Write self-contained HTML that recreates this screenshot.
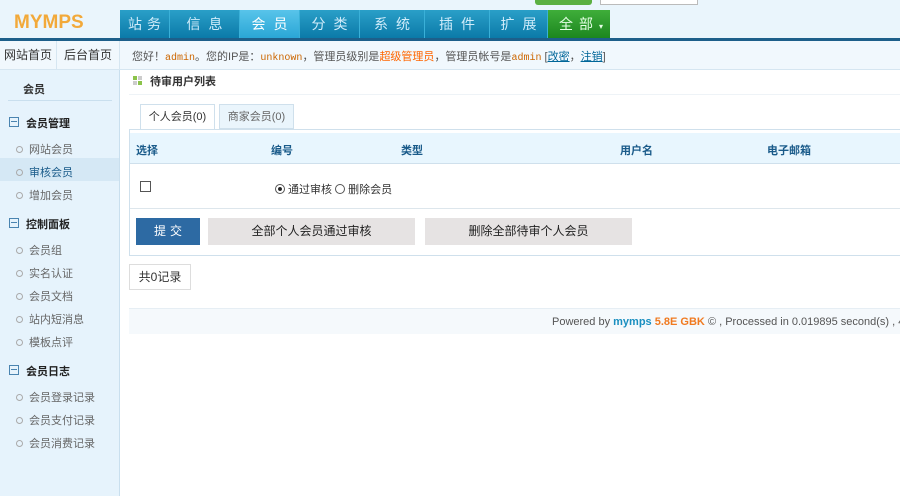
<!DOCTYPE html>
<html><head><meta charset="utf-8"><style>
*{margin:0;padding:0;box-sizing:border-box}
body{width:900px;height:496px;overflow:hidden;background:#fff;font-family:"Liberation Sans","Noto Sans CJK SC",sans-serif;font-size:12px;color:#333;position:relative}
.a{position:absolute}
.top{left:0;top:0;width:900px;height:40px;background:#eaf5fc}
.logo{left:14px;top:12px;font-size:19px;font-weight:bold;color:#f2a93a}
.nav{left:120px;top:10px;height:28px;width:490px;background:linear-gradient(#2a9fc8,#0b7aa8)}
.nav span{position:absolute;top:0;height:28px;line-height:28px;text-align:center;color:#d0ecfa;font-size:14px;letter-spacing:8px;text-indent:8px;border-right:1px solid #3ab0d8;white-space:nowrap;overflow:hidden}
.line{left:0;top:38px;width:900px;height:3px;background:#1d5f8a}
.row2{left:0;top:41px;width:900px;height:29px;background:#f1f8fd;border-bottom:1px solid #d6e6f1}
.side{left:0;top:70px;width:120px;height:426px;background:#e6f3fc;border-right:1px solid #c9dfee}
.si{position:absolute;left:29px;color:#666;font-size:11px}
.si:before{content:"";position:absolute;left:-13px;top:5px;width:5px;height:5px;border:1px solid #aaa;border-radius:50%}
.sh{position:absolute;left:26px;font-weight:bold;color:#222;font-size:11px}
.sh:before{content:"";position:absolute;left:-17px;top:2px;width:10px;height:10px;border:1px solid #4a84b0;box-sizing:border-box}
.sh:after{content:"";position:absolute;left:-15px;top:6px;width:6px;height:1px;background:#4a84b0}
.btn{position:absolute;top:218px;height:27px;line-height:27px;text-align:center;background:#e6e3e3;color:#222;font-size:12px}
</style></head><body>
<div class="a top"></div>
<div class="a" style="left:535px;top:0;width:57px;height:5px;background:#5bb042;border-radius:0 0 3px 3px"></div>
<div class="a" style="left:600px;top:0;width:98px;height:5px;border:1px solid #bbb;border-top:none;background:#fff"></div>
<div class="a logo">MYMPS</div>
<div class="a nav">
<span style="left:0;width:50px;letter-spacing:5px;text-indent:5px">站务</span>
<span style="left:50px;width:70px">信息</span>
<span style="left:120px;width:60px;background:linear-gradient(#58c4ea,#2aa6d6);color:#fff">会员</span>
<span style="left:180px;width:60px">分类</span>
<span style="left:240px;width:65px">系统</span>
<span style="left:305px;width:65px">插件</span>
<span style="left:370px;width:58px">扩展</span>
<span style="left:428px;width:62px;background:linear-gradient(#3fae3a,#1c861f);border:none;color:#e6ffe6;letter-spacing:6px;text-indent:4px">全部<small style="font-size:8px;letter-spacing:0">▾</small></span>
</div>
<div class="a line"></div>
<div class="a row2"></div>
<div class="a" style="left:0;top:41px;width:57px;height:29px;line-height:28px;text-align:center;border-right:1px solid #d6e6f1;font-size:12px">网站首页</div>
<div class="a" style="left:57px;top:41px;width:63px;height:29px;line-height:28px;text-align:center;border-right:1px solid #d6e6f1;font-size:12px">后台首页</div>
<div class="a" style="left:132px;top:48px;font-size:11px;color:#555;white-space:nowrap">您好！<span style="color:#c60;font-family:'Liberation Mono',monospace;font-size:10px">admin</span>。您的IP是：<span style="color:#c60;font-family:'Liberation Mono',monospace;font-size:10px">unknown</span>，管理员级别是<span style="color:#f60">超级管理员</span>，管理员帐号是<span style="color:#c60;font-family:'Liberation Mono',monospace;font-size:10px">admin</span> [<u style="color:#069">改密</u>，<u style="color:#069">注销</u>]</div>
<div class="a side"></div>
<div class="a" style="left:23px;top:81px;font-weight:bold;font-size:11px">会员</div>
<div class="a" style="left:8px;top:100px;width:104px;height:1px;background:#c9dfee"></div>
<div class="sh" style="top:115px">会员管理</div>
<div class="si" style="top:141px">网站会员</div>
<div class="a" style="left:0;top:158px;width:119px;height:23px;background:#d5e8f5"></div>
<div class="si" style="top:164px;color:#1a5b8a">审核会员</div>
<div class="si" style="top:187px">增加会员</div>
<div class="sh" style="top:216px">控制面板</div>
<div class="si" style="top:242px">会员组</div>
<div class="si" style="top:265px">实名认证</div>
<div class="si" style="top:288px">会员文档</div>
<div class="si" style="top:311px">站内短消息</div>
<div class="si" style="top:334px">模板点评</div>
<div class="sh" style="top:363px">会员日志</div>
<div class="si" style="top:389px">会员登录记录</div>
<div class="si" style="top:412px">会员支付记录</div>
<div class="si" style="top:435px">会员消费记录</div>
<div class="a" style="left:133px;top:76px;width:4px;height:4px;background:#8bc34a;box-shadow:5px 0 #ccc,0 5px #ccc,5px 5px #8bc34a"></div>
<div class="a" style="left:150px;top:73px;font-weight:bold;font-size:11px">待审用户列表</div>
<div class="a" style="left:129px;top:94px;width:771px;height:1px;background:#eef3f7"></div>
<div class="a" style="left:140px;top:104px;width:75px;height:26px;border:1px solid #cfe0ec;border-bottom:none;background:#fff;text-align:center;line-height:24px;font-size:11px">个人会员(0)</div>
<div class="a" style="left:219px;top:104px;width:75px;height:25px;border:1px solid #cfe0ec;background:#eaf5fc;text-align:center;line-height:24px;font-size:11px;color:#666">商家会员(0)</div>
<div class="a" style="left:129px;top:129px;width:771px;height:127px;border:1px solid #cfe0ec;border-right:none"></div>
<div class="a" style="left:130px;top:133px;width:770px;height:31px;background:#e8f6fe;border-bottom:1px solid #cfe0ec;font-weight:bold;color:#1a5b8a;font-size:11px">
<span class="a" style="left:6px;top:9px">选择</span><span class="a" style="left:141px;top:9px">编号</span><span class="a" style="left:271px;top:9px">类型</span><span class="a" style="left:490px;top:9px">用户名</span><span class="a" style="left:637px;top:9px">电子邮箱</span></div>
<div class="a" style="left:140px;top:181px;width:11px;height:11px;border:1px solid #555"></div>
<div class="a" style="left:275px;top:181px;font-size:11px;white-space:nowrap"><span style="display:inline-block;width:10px;height:10px;border:1px solid #555;border-radius:50%;vertical-align:-1px;background:radial-gradient(#222 30%,#fff 40%)"></span> 通过审核 <span style="display:inline-block;width:10px;height:10px;border:1px solid #555;border-radius:50%;vertical-align:-1px"></span> 删除会员</div>
<div class="a" style="left:130px;top:208px;width:770px;height:1px;background:#dde6ec"></div>
<div class="btn" style="left:136px;width:64px;background:#2d6aa3;color:#fff;letter-spacing:4px;text-indent:4px">提交</div>
<div class="btn" style="left:208px;width:207px">全部个人会员通过审核</div>
<div class="btn" style="left:425px;width:207px">删除全部待审个人会员</div>
<div class="a" style="left:129px;top:264px;width:62px;height:26px;border:1px solid #ddd;line-height:24px;text-align:center;font-size:12px">共0记录</div>
<div class="a" style="left:129px;top:308px;width:771px;height:26px;background:#f5f9fc;border-top:1px solid #e6eef4"></div>
<div class="a" style="left:552px;top:316px;font-size:11px;color:#555;white-space:nowrap">Powered by <b style="color:#1a8fc0">mymps</b> <b style="color:#f07a20">5.8E GBK</b> © , Processed in 0.019895 second(s) , 4 queries</div>
</body></html>
